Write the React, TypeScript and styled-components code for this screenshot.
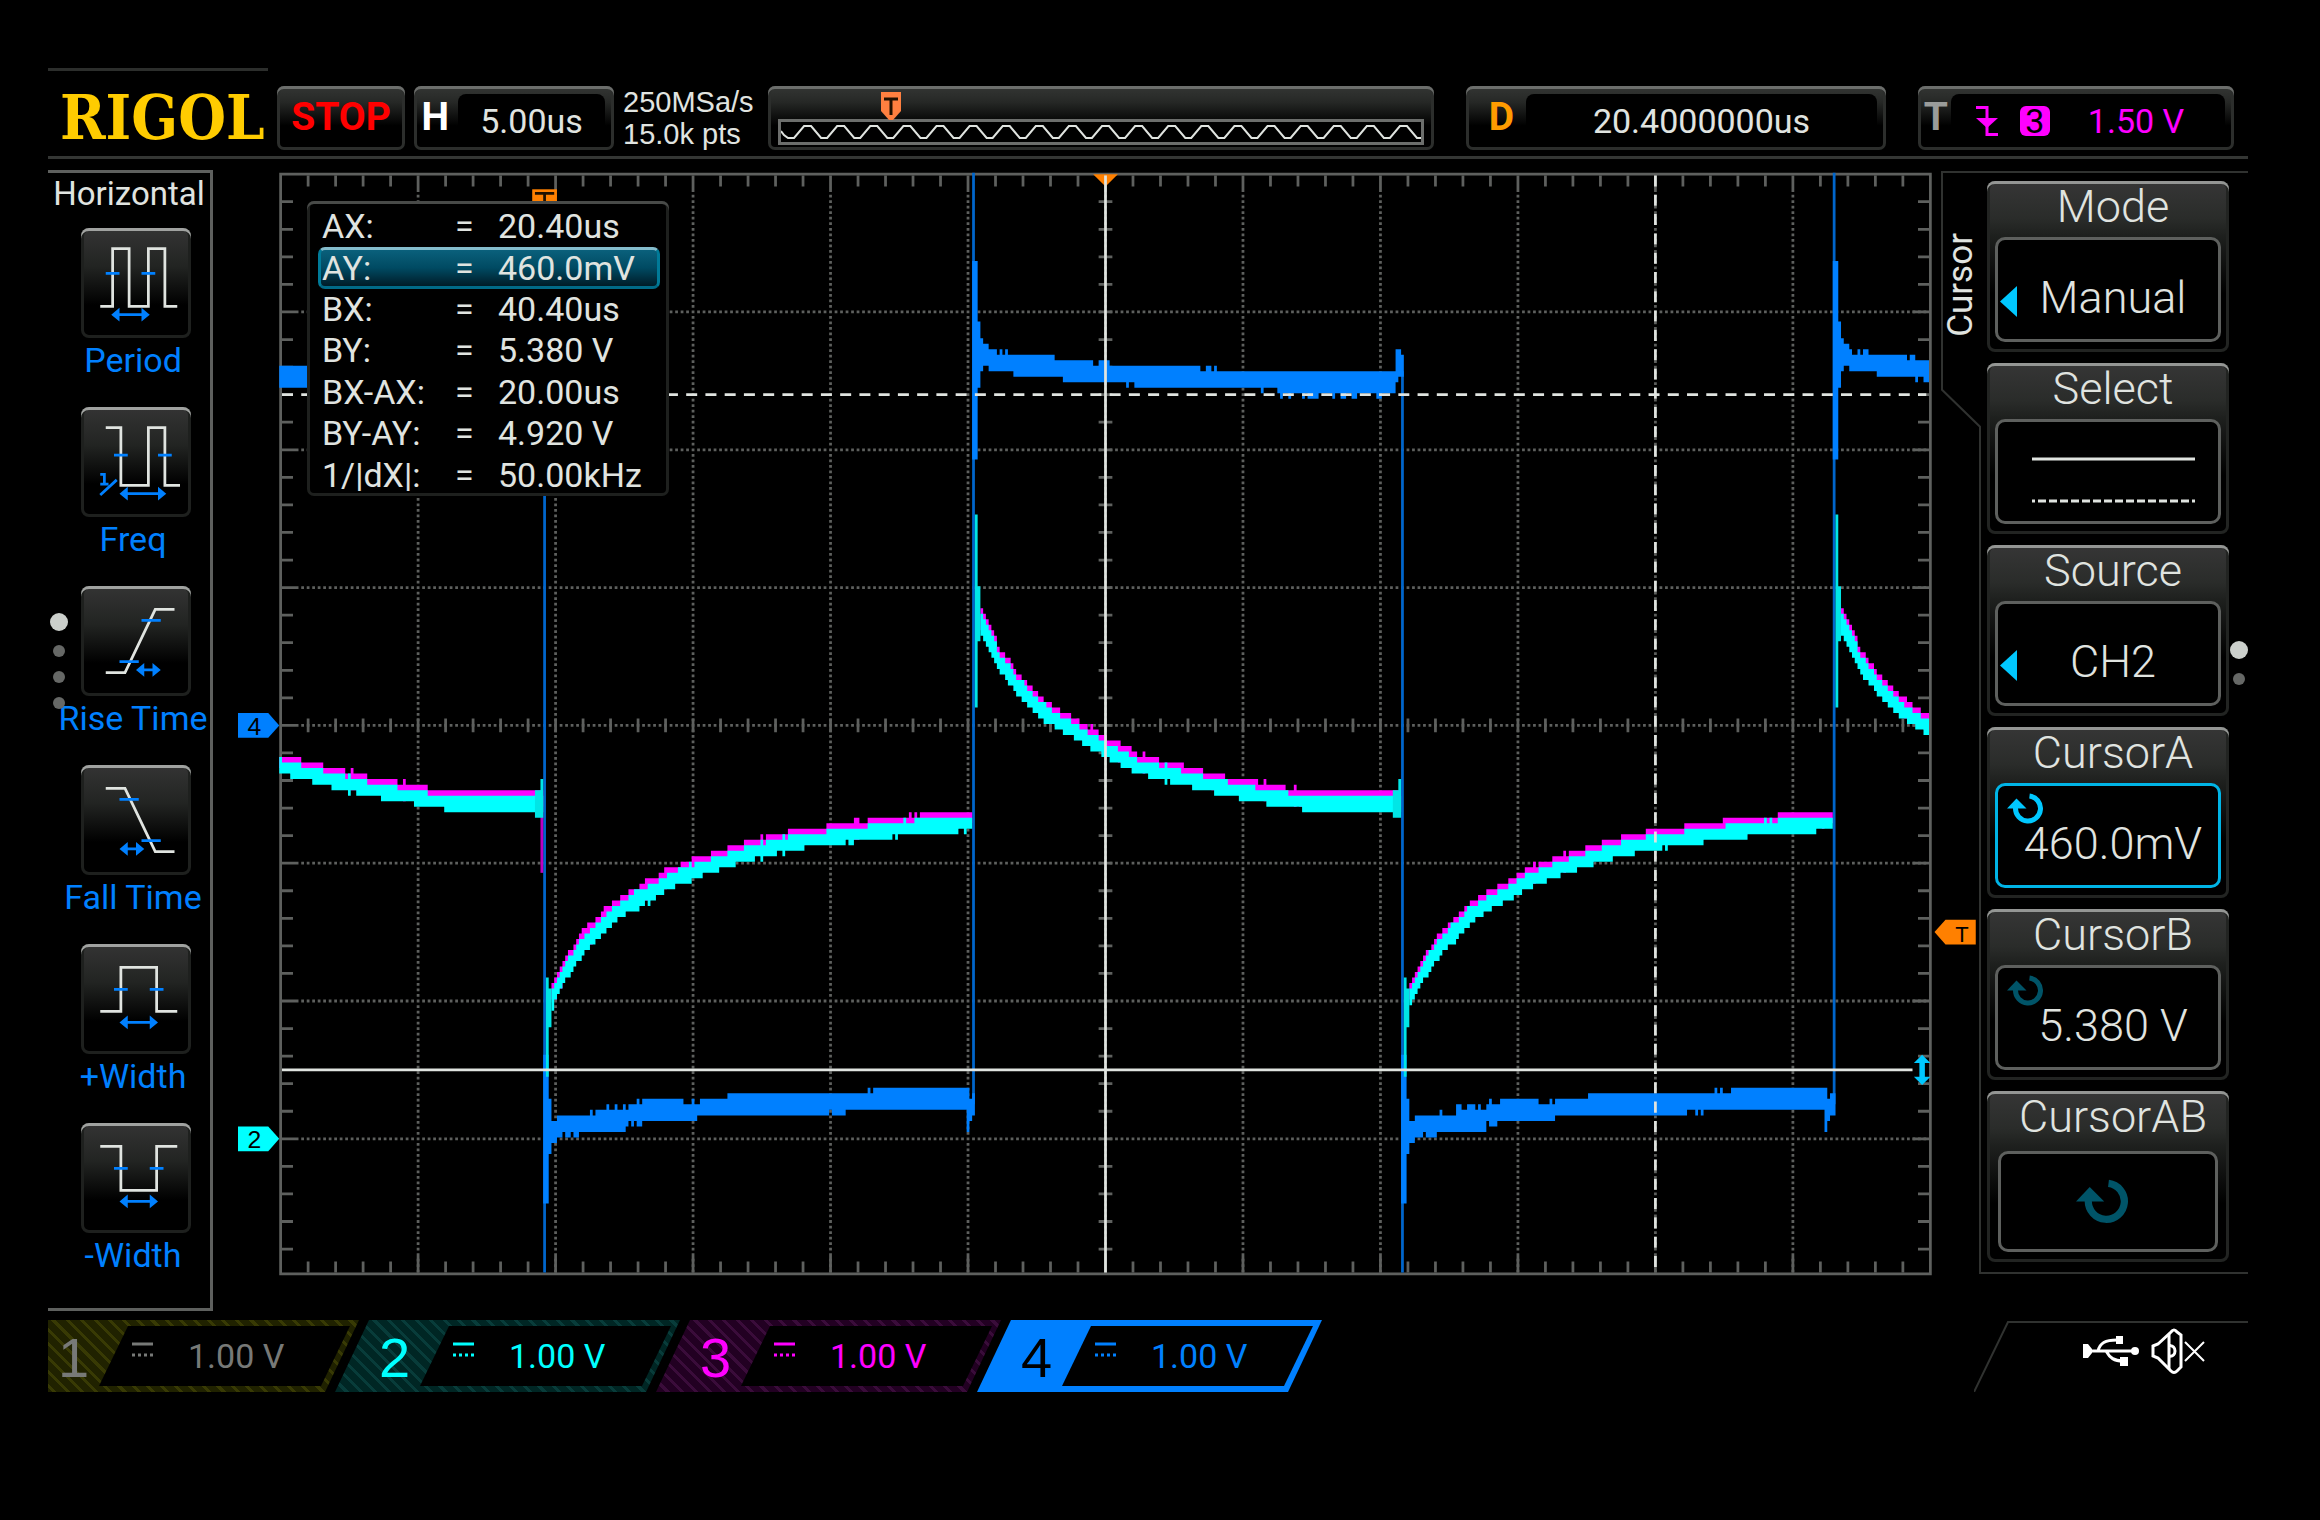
import React from "react";
import styled, { createGlobalStyle, css } from "styled-components";

const BLUE = "#0080ff";
const CYAN = "#00ffff";
const MAGENTA = "#ff00ff";
const ORANGE = "#ff8000";
const ACTIVE = "#00c8ff";
const INK = "#e0e4e0";
const GRID = "#5e605e";

const Global = createGlobalStyle`
  *, *::before, *::after { box-sizing: border-box; }
  body { margin: 0; background: #000; color: ${INK}; font-family: Roboto, "Liberation Sans", sans-serif; font-size: 34px; }
  button { font: inherit; color: inherit; background: none; border: 0; padding: 0; cursor: pointer; }
  svg { display: block; }
`;

const bevel = css`
  border-radius: 7px;
  box-shadow: inset 0 3px 0 #6c6e6c, inset 0 0 0 3px #2c2e2c;
  background: linear-gradient(#343634, #262826 25%, #000 62%);
`;

const Screen = styled.div`
  min-height: 100vh;
  padding: 68px 72px 128px 48px;
  overflow: hidden;
`;

/* ---------- header ---------- */

const TopRule = styled.div`
  width: 220px;
  height: 3px;
  background: #2c2e2c;
`;

const Header = styled.header`
  display: flex;
  align-items: center;
  gap: 9px;
  padding: 9px 14px 0 0;
  height: 88px;
  border-bottom: 3px solid #343634;
  white-space: nowrap;
`;

const Logo = styled.div`
  width: 220px;
  padding-left: 12px;
  flex: none;
  color: #ffcc00;
  font: bold 61px/64px "DejaVu Serif Condensed", "DejaVu Serif", serif;
  font-stretch: condensed;
`;

const StopButton = styled.button`
  ${bevel}
  flex: none;
  width: 128px;
  height: 64px;
  padding-bottom: 3px;
  color: #ff0000;
  font-weight: 700;
  font-size: 39px;
`;

const Readout = styled.button<{ $width: number }>`
  ${bevel}
  flex: none;
  display: flex;
  width: ${(p) => p.$width}px;
  height: 64px;
  padding: 8px 9px 3px 0;
`;

const ReadoutKey = styled.span<{ $color: string; $width: number; $gap?: number }>`
  width: ${(p) => p.$width}px;
  padding-right: ${(p) => p.$gap ?? 9}px;
  flex: none;
  color: ${(p) => p.$color};
  font-weight: 700;
  font-size: 39px;
  line-height: 46px;
  text-align: right;
`;

const ReadoutValue = styled.span`
  flex: 1;
  display: flex;
  align-items: center;
  justify-content: center;
  background: #000;
  border-radius: 8px 8px 0 0;
`;

const TriggerValue = styled(ReadoutValue)`
  gap: 22px;
  padding-right: 16px;
  color: ${MAGENTA};
`;

const Spacer = styled.div`
  flex: none;
  width: 14px;
`;

const SampleInfo = styled.div`
  flex: none;
  width: 136px;
  font-family: "Liberation Sans", sans-serif;
  font-size: 29px;
  line-height: 32px;
`;

const Memory = styled.div`
  ${bevel}
  position: relative;
  flex: 1;
  height: 64px;
  padding: 33px 10px 5px;
`;

const MemoryStrip = styled.div`
  height: 26px;
  border: 3px solid #6c6e6c;
  background: #000;
  svg { width: 100%; height: 20px; }
`;

const MemoryMark = styled.svg`
  position: absolute;
  left: 113px;
  top: 6px;
`;

const SourceBadge = styled.span`
  width: 30px;
  height: 30px;
  border-radius: 6px;
  background: ${MAGENTA};
  color: #000;
  line-height: 30px;
  text-align: center;
  margin-right: 16px;
`;

/* ---------- measurement panel ---------- */

const Main = styled.main`
  display: flex;
  align-items: flex-start;
  padding-top: 11px;
`;

const Measures = styled.nav`
  position: relative;
  flex: none;
  width: 165px;
  margin-right: 25px;
  padding-bottom: 6px;
  border: 3px solid ${GRID};
  border-left: 0;
`;

const MeasuresTitle = styled.h2`
  margin: 0 0 14px;
  font-size: 33px;
  font-weight: 400;
  line-height: 41px;
  text-align: center;
`;

const MeasureButton = styled.button`
  display: flex;
  flex-direction: column;
  align-items: center;
  width: 100%;
  height: 179px;
  padding-left: 8px;
  color: ${BLUE};
  line-height: 44px;
  white-space: nowrap;
`;

const Tile = styled.span`
  margin-left: 6px;
  border-radius: 8px;
  box-shadow: inset 0 3px 0 #a0a2a0, inset 0 0 0 3px #1e201e;
  background: linear-gradient(#343434, #222422 35%, #000 70%);
  svg { width: 110px; height: 110px; }
`;

const Dots = styled.div<{ $side: "left" | "right" }>`
  position: absolute;
  display: flex;
  flex-direction: column;
  align-items: center;
  gap: 14px;
  width: 18px;
  top: ${(p) => (p.$side === "left" ? 440 : 471)}px;
  ${(p) => p.$side}: ${(p) => (p.$side === "left" ? 2 : 0)}px;
`;

const Dot = styled.i<{ $on?: boolean }>`
  width: ${(p) => (p.$on ? 18 : 12)}px;
  height: ${(p) => (p.$on ? 18 : 12)}px;
  border-radius: 50%;
  background: ${(p) => (p.$on ? "#ccd0cc" : "#666866")};
`;

/* ---------- plot ---------- */

const PlotArea = styled.section`
  position: relative;
  flex: 1;
  min-width: 0;
`;

const PlotSvg = styled.svg`
  width: 100%;
  aspect-ratio: 1702 / 1108;
  overflow: visible;
`;

const CursorBox = styled.div`
  position: absolute;
  left: 69px;
  top: 31px;
  width: 362px;
  padding: 5px 9px 0 11px;
  border-radius: 7px;
  background: #000;
  box-shadow: inset 0 3px 0 #484a48, inset 0 0 0 3px #1e201e;
`;

const CursorTable = styled.table`
  width: 100%;
  height: 290px;
  border-collapse: separate;
  border-spacing: 0;
  table-layout: fixed;
  white-space: nowrap;
`;

const CursorRow = styled.tr<{ $active?: boolean }>`
  th, td {
    padding: 0;
    font-weight: 400;
    line-height: 35px;
    text-align: left;
    border: 3px solid transparent;
    border-left-width: 0;
    border-right-width: 0;
  }
  th { width: 137px; padding-left: 1px; border-left-width: 3px; }
  td:nth-child(2) { width: 43px; }
  td:last-child { border-right-width: 3px; }
  ${(p) =>
    p.$active &&
    css`
      th, td {
        background: linear-gradient(#0c6480, #004a62 50%, #00141e) border-box;
        border-color: #84bccc #007a98 #006a88 #007a98;
      }
      th { border-radius: 7px 0 0 7px; }
      td:last-child { border-radius: 0 7px 7px 0; }
    `}
`;

/* ---------- right menu ---------- */

const Menu = styled.aside`
  position: relative;
  flex: none;
  display: flex;
  width: 308px;
  padding: 11px 19px 13px 0;
`;

const MenuOutline = styled.svg`
  position: absolute;
  inset: 0;
  width: 100%;
  height: 100%;
  pointer-events: none;
`;

const MenuTab = styled.h2`
  width: 47px;
  margin: 0;
  padding-bottom: 52px;
  font-size: 35px;
  font-weight: 400;
  line-height: 42px;
  writing-mode: vertical-rl;
  transform: rotate(180deg);
  align-self: flex-start;
`;

const MenuItems = styled.div`
  flex: 1;
  display: flex;
  flex-direction: column;
  gap: 11px;
`;

const MenuButton = styled.button`
  height: 171px;
  padding: 2px 8px 10px;
  border-radius: 8px;
  box-shadow: inset 0 3px 0 #949694, inset 0 0 0 3px #222422;
  background: linear-gradient(#363636, #2a2c2a 22%, #1e201e 32%, #000 66%);
  display: flex;
  flex-direction: column;
  font-weight: 300;
  font-size: 45px;
`;

const MenuTitle = styled.span`
  flex: none;
  align-self: stretch;
  height: 54px;
  padding-left: 10px;
  line-height: 48px;
  text-align: center;
`;

const MenuValue = styled.span<{ $active?: boolean }>`
  position: relative;
  flex: 1;
  align-self: stretch;
  display: flex;
  align-items: center;
  justify-content: center;
  padding: 16px 0 0 10px;
  border: 3px solid ${(p) => (p.$active ? "#00b4e6" : GRID)};
  border-radius: 10px;
  background: #000;
`;

const KnobValue = styled(MenuValue)`
  margin: 4px 3px 0;
  padding: 0 12px 0 0;
`;

const ValueArrow = styled.svg`
  position: absolute;
  left: 2px;
  top: 46px;
`;

const KnobCorner = styled.span`
  position: absolute;
  left: 9px;
  top: 7px;
`;

/* ---------- footer ---------- */

const Footer = styled.footer`
  display: flex;
  height: 72px;
  margin-top: 9px;
  overflow: hidden;
`;

const Channels = styled.div`
  display: flex;
  margin-left: -34px;
`;

const ChannelTab = styled.button<{ $fill: string; $stripe: string }>`
  display: flex;
  width: 345px;
  height: 72px;
  margin-right: -24px;
  padding: 6px 9px 6px 0;
  clip-path: polygon(34px 0, 100% 0, calc(100% - 34px) 100%, 0 100%);
  background: repeating-linear-gradient(45deg, ${(p) => p.$fill} 0 7px, ${(p) => p.$stripe} 7px 10px);
`;

const ChannelNumber = styled.span<{ $color: string }>`
  width: 85px;
  padding-left: 44px;
  color: ${(p) => p.$color};
  font: 56px/64px "Liberation Sans", sans-serif;
  text-align: left;
`;

const ChannelBody = styled.span<{ $color: string }>`
  flex: 1;
  display: flex;
  align-items: center;
  gap: 35px;
  height: 60px;
  padding-left: 33px;
  background: #000;
  color: ${(p) => p.$color};
  clip-path: polygon(29px 0, 100% 0, calc(100% - 29px) 100%, 0 100%);
  line-height: 60px;
  svg { margin-bottom: 14px; }
`;

const Status = styled.div`
  position: relative;
  display: flex;
  align-items: center;
  justify-content: flex-end;
  gap: 12px;
  width: 274px;
  margin-left: auto;
  padding: 0 43px 10px 0;
`;

/* ---------- drawings ---------- */

type MeasureArt = { label: string; line: string; ticks: [number, number, number][]; arrow: [number, number, number]; over?: boolean };

const measures: MeasureArt[] = [
  { label: "Period", line: "M7 28.5H11.5V7.5H17.5V28.5H24.5V7.5H30.5V28.5H35", ticks: [[9, 14, 16.5], [22, 27, 16.5]], arrow: [11, 25, 31.5] },
  { label: "Freq", line: "M9 7.5H14.5V28.5H24.5V7.5H30.5V28.5H36", ticks: [[12, 17, 17.5], [28, 33, 17.5]], arrow: [14, 31, 31.5], over: true },
  { label: "Rise Time", line: "M9 31.5H16L27 8.5H34", ticks: [[22, 29, 12.5], [14, 21, 27.5]], arrow: [20, 29, 30.5] },
  { label: "Fall Time", line: "M9 8.5H16L27 31.5H34", ticks: [[14, 21, 12.5], [22, 29, 27.5]], arrow: [14, 23, 30.5] },
  { label: "+Width", line: "M7 24.5H14.5V8.5H27.5V24.5H35", ticks: [[12, 17, 16.5], [25, 30, 16.5]], arrow: [14, 28, 28.5] },
  { label: "-Width", line: "M7 8.5H14.5V24.5H27.5V8.5H35", ticks: [[12, 17, 16.5], [25, 30, 16.5]], arrow: [14, 28, 28.5] },
];

const MeasureIcon = ({ art }: { art: MeasureArt }) => {
  const [a, b, y] = art.arrow;
  return (
    <svg viewBox="0 0 40 40" fill="none" aria-hidden="true">
      <path d={art.line} stroke={INK} />
      <path d={art.ticks.map(([l, r, ty]) => `M${l} ${ty}H${r}`).join("") + `M${a + 2} ${y}H${b - 2}`} stroke={BLUE} />
      <path d={`M${a} ${y}l3-2.5v5zM${b} ${y}l-3-2.5v5z`} fill={BLUE} />
      {art.over && <path d="M7 24.5H8.5V28M7 28H10M7 32L13 26.5" stroke={BLUE} />}
    </svg>
  );
};

const KnobIcon = ({ color, width }: { color: string; width: number }) => (
  <svg width={width} viewBox="0 0 36 31" fill="none" aria-hidden="true">
    <path d="M22.5 3A12.5 12.5 0 1 1 8.5 15" stroke={color} strokeWidth="5" />
    <path d="M0 15.5L9.5 5.5L19.5 15.5Z" fill={color} />
  </svg>
);

/* Coordinates below are in the instrument's own 800 x 480 pixels. */
const LEFT = 84;
const RIGHT = 684;
const TOP = 38;
const BOTTOM = 437;
const MID_X = 384;
const MID_Y = 238;

type Column = [number, number, number];

const noise = (x: number, seed: number) => {
  const v = Math.sin(x * 12.9898 + seed * 78.233) * 43758.5453;
  return v - Math.floor(v);
};

const outline = (cols: Column[]) => {
  const shown = cols.filter(([x]) => x >= LEFT && x < RIGHT);
  const over = shown.map(([x, t]) => `L${x} ${t}H${x + 1}`).join("");
  const under = [...shown].reverse().map(([x, , b]) => `L${x + 1} ${b}H${x}`).join("");
  return `M${over.slice(1)}${under}Z`;
};

/* [first offset, top, bottom], each run lasting until the next one starts */
const highRuns: Column[] = [
  [0, 70, 142], [2, 92, 116], [3, 98, 110], [4, 100, 108], [6, 102, 110], [13, 104, 110], [16, 104, 112], [30, 106, 112],
  [33, 106, 114], [50, 108, 114], [60, 108, 116], [89, 110, 116], [111, 110, 118], [154, 102, 114], [155, 102, 112], [156, 104, 112],
];
const lowRuns: Column[] = [
  [0, 358, 412], [2, 374, 394], [3, 382, 390], [5, 380, 388], [13, 380, 386], [20, 378, 386], [23, 376, 386], [29, 378, 386],
  [31, 376, 384], [36, 374, 382], [55, 376, 382], [57, 374, 380], [68, 372, 380], [110, 372, 378], [120, 370, 378],
  [154, 370, 386], [155, 374, 382], [156, 372, 380],
];

const fromRuns = (runs: Column[], start: number, length: number) => {
  const cols: Column[] = [];
  for (let i = 0; i <= length; i++) {
    const at = runs.reduce((best, r, k) => (r[0] <= i ? k : best), 0);
    let [, t, b] = runs[at];
    const next = runs[at + 1];
    if (i > 5 && i < 140 && next && next[0] - i < 7) {
      if (next[1] !== t && noise(start + i, 3) > 0.7) t = next[1];
      if (next[2] !== b && noise(start + i, 5) > 0.7) b = next[2];
    }
    if (runs === highRuns && i > 111 && i < 150 && noise(start + i, 8) > 0.62) b += 2;
    cols.push([start + i, t, b]);
  }
  return cols;
};

const decay: [number, number][] = [
  [3, 201], [5.5, 206], [10.7, 217], [16, 223.5], [21, 229], [26, 233.5], [31, 237], [37, 240.5], [48, 247], [60, 253.5],
  [77, 257.8], [93, 261.8], [104, 263.7], [121, 266.6], [140, 267.4], [157, 267.2],
];
const charge: [number, number][] = [
  [3, 338], [5, 334.4], [8.3, 327.8], [11, 323.5], [15, 318], [19, 314], [22.6, 310.2], [27, 306], [33, 302.4], [38, 300],
  [43, 297], [48.5, 294], [55, 291.5], [63, 288.7], [70.6, 286.4], [78, 284.2], [87.5, 281.8], [97, 280.2], [107, 279],
  [117, 277.6], [125, 276.6], [133, 275.6], [146, 275], [157, 274],
];

const level = (curve: [number, number][], x: number) => {
  for (let i = 1; i < curve.length; i++) {
    const [x0, y0] = curve[i - 1];
    const [x1, y1] = curve[i];
    if (x <= x1) return y0 + ((y1 - y0) * (x - x0)) / (x1 - x0);
  }
  return curve[curve.length - 1][1];
};

const fromCurve = (curve: [number, number][], start: number, length: number, lift: number, seed: number) => {
  const cols: Column[] = [];
  for (let i = 3; i <= length; i++) {
    const a = level(curve, i);
    const b = level(curve, i + 1);
    const jitter = noise(start + i, seed) > 0.86 ? 1 : 0;
    const t = 2 * Math.round((Math.min(a, b) - 2.4 - lift - jitter * 0.7) / 2);
    const u = 2 * Math.round((Math.max(a, b) + 2.4 - lift + jitter * 0.7) / 2);
    cols.push([start + i, t, u]);
  }
  return cols;
};

const highs = [[24, 156], [336, 156], [649, 156]];
const lows = [[180, 156], [492, 157]];

const bluePath = highs.map(([s, n]) => outline(fromRuns(highRuns, s, n))).join("") + lows.map(([s, n]) => outline(fromRuns(lowRuns, s, n))).join("");

const slowPath = (lift: number, seed: number) =>
  highs.map(([s, n]) => outline(fromCurve(decay, s, n - 1, lift, seed))).join("") +
  lows.map(([s, n]) => outline(fromCurve(charge, s, n - 1, lift, seed))).join("");

const spikes = [336, 649].map((s) => `M${s + 1} 162h1v26h1v20h-1v24h-1z`).join("") +
  [180, 492].map((s) => `M${s - 1} 258h1v14h-3v-10h2zM${s + 1} 330h1v4h1v14h-1v18h-1z`).join("");

const ticks = () => {
  let d = "";
  for (let x = LEFT + 10; x < RIGHT; x += 10) {
    const n = (x - LEFT) % 50 === 0 ? 6 : 4;
    d += `M${x} ${TOP + 1}h1v${n}h-1zM${x} ${BOTTOM - n}h1v${n}h-1zM${x} ${MID_Y - 2}h1v5h-1z`;
  }
  for (let y = TOP + 10; y < BOTTOM; y += 10) {
    const n = (y - TOP) % 50 === 0 ? 6 : 4;
    d += `M${LEFT + 1} ${y}v1h${n}v-1zM${RIGHT - n} ${y}v1h${n}v-1zM${MID_X - 2} ${y}v1h5v-1z`;
  }
  return d;
};

const gridLines = () => {
  let d = "";
  for (let x = LEFT + 50; x < RIGHT; x += 50) d += `M${x + 0.5} ${TOP + 8}V${BOTTOM}`;
  for (let y = TOP + 50; y < BOTTOM; y += 50) d += `M${LEFT + 8} ${y + 0.5}H${RIGHT}`;
  return d;
};

const Plot = () => (
  <PlotSvg viewBox="69 37 619 402" preserveAspectRatio="none" role="img" aria-label="Waveform display" fontFamily="Liberation Sans, sans-serif" fontSize="9" textAnchor="middle">
    <path d={gridLines()} stroke={GRID} strokeDasharray="1 1" fill="none" />
    <path d={ticks()} fill={GRID} />
    <rect x={LEFT + 0.5} y={TOP + 0.5} width={RIGHT - LEFT} height={BOTTOM - TOP} fill="none" stroke={GRID} />

    <path d="M180.5 52V437M336.5 38V376M492.5 110V437M649.5 38V376" stroke="#0066cc" fill="none" />
    <path d={bluePath} fill={BLUE} />
    <path d={slowPath(2, 4)} fill={MAGENTA} />
    <path d="M179 268h1v24h-1z" fill="#c000c0" />
    <path d={slowPath(0, 2)} fill={CYAN} />
    <path d={spikes} fill="#00e6e6" />

    <path d="M380 38.5h9l-4.500 4.500z" fill={ORANGE} />
    <path d="M384.5 39V437M85 363.5H678" stroke={INK} fill="none" />
    <path d="M85 118.500H683M584.5 39V437" stroke={INK} strokeDasharray="4 3" fill="none" />
    <path d="M681.5 358l3 3h-2v5h2l-3 3-3-3h2v-5h-2z" fill={ACTIVE} />

    <rect x="176" y="44" width="9" height="8" fill={ORANGE} />
    <path d="M177 45.500H184M180.500 45V52" stroke="#201000" fill="none" />

    <path d="M69 234h11l4 4.500-4 4.500H69z" fill={BLUE} />
    <text x="75" y="242">4</text>
    <path d="M69 384h11l4 4.500-4 4.500H69z" fill={CYAN} />
    <text x="75" y="392">2</text>
    <path d="M701 309h-11l-4 4.500 4 4.500h11z" fill={ORANGE} />
    <text x="696" y="317" fontSize="8">T</text>
  </PlotSvg>
);

const memoryWave = "M0 9L3 13" + Array.from({ length: 20 }, (_, k) => {
  const c = 10 + 33 * k;
  return `L${c - 3} 16H${c + 3}` + (k < 19 ? `L${c + 13} 4H${c + 20}` : "");
}).join("");

/* ---------- data ---------- */

const cursorRows = [
  ["AX:", "20.40us"], ["AY:", "460.0mV"], ["BX:", "40.40us"], ["BY:", "5.380 V"],
  ["BX-AX:", "20.00us"], ["BY-AY:", "4.920 V"], ["1/|dX|:", "50.00kHz"],
];

const channels = [
  { id: "1", fill: "#202200", stripe: "#383a04", number: "#777977", text: "#777977" },
  { id: "2", fill: "#002624", stripe: "#083c3a", number: CYAN, text: CYAN },
  { id: "3", fill: "#220022", stripe: "#3a0c3a", number: MAGENTA, text: MAGENTA },
  { id: "4", fill: BLUE, stripe: BLUE, number: "#000", text: BLUE },
];

function Arrow() {
  return (
    <ValueArrow width="17" height="31" aria-hidden="true">
      <path d="M0 15.500L17 0V31Z" fill={ACTIVE} />
    </ValueArrow>
  );
}

const menu: { title: string; value: React.ReactNode }[] = [
  { title: "Mode", value: <MenuValue><Arrow />Manual</MenuValue> },
  {
    title: "Select",
    value: (
      <MenuValue>
        <svg width="163" height="46" fill="none" stroke={INK} strokeWidth="3" aria-hidden="true">
          <path d="M0 2H163" />
          <path d="M0 44H3M6 44H157" strokeDasharray="8 3" />
          <path d="M160 44H163" />
        </svg>
      </MenuValue>
    ),
  },
  { title: "Source", value: <MenuValue><Arrow />CH2</MenuValue> },
  { title: "CursorA", value: <MenuValue $active><KnobCorner><KnobIcon color={ACTIVE} width={36} /></KnobCorner>460.0mV</MenuValue> },
  { title: "CursorB", value: <MenuValue><KnobCorner><KnobIcon color="#005468" width={36} /></KnobCorner>5.380 V</MenuValue> },
  { title: "CursorAB", value: <KnobValue><KnobIcon color="#005468" width={52} /></KnobValue> },
];

export default function App() {
  return (
    <Screen>
      <Global />
      <TopRule />
      <Header>
        <Logo>RIGOL</Logo>
        <StopButton>STOP</StopButton>
        <Readout $width={200}>
          <ReadoutKey $color="#fff" $width={44}>H</ReadoutKey>
          <ReadoutValue>5.00us</ReadoutValue>
        </Readout>
        <SampleInfo>
          <div>250MSa/s</div>
          <div>15.0k pts</div>
        </SampleInfo>
        <Memory>
          <MemoryStrip>
            <svg viewBox="0 0 638 20" preserveAspectRatio="none" aria-hidden="true">
              <path d={memoryWave} fill="none" stroke={INK} strokeWidth="2" />
            </svg>
          </MemoryStrip>
          <MemoryMark width="20" height="28" aria-hidden="true">
            <path d="M0 0H20V19L12 28H8L0 19Z" fill="#ff8040" />
            <path d="M3 7H17M10 7V23" stroke="#201000" strokeWidth="3" />
          </MemoryMark>
        </Memory>
        <Spacer />
        <Readout $width={420}>
          <ReadoutKey $color="#ff9c00" $width={60} $gap={12}>D</ReadoutKey>
          <ReadoutValue>20.4000000us</ReadoutValue>
        </Readout>
        <Spacer />
        <Readout $width={316}>
          <ReadoutKey $color="#9a9c9a" $width={33} $gap={3}>T</ReadoutKey>
          <TriggerValue>
            <svg width="22" height="30" aria-hidden="true">
              <path d="M0 1.500H11V28.500H22" fill="none" stroke={MAGENTA} strokeWidth="3" />
              <path d="M0 12H22L11 22Z" fill={MAGENTA} />
            </svg>
            <SourceBadge>3</SourceBadge>
            <span>1.50 V</span>
          </TriggerValue>
        </Readout>
      </Header>

      <Main>
        <Measures aria-label="Horizontal measurements">
          <MeasuresTitle>Horizontal</MeasuresTitle>
          {measures.map((m) => (
            <MeasureButton key={m.label}>
              <Tile><MeasureIcon art={m} /></Tile>
              {m.label}
            </MeasureButton>
          ))}
          <Dots $side="left"><Dot $on /><Dot /><Dot /><Dot /></Dots>
        </Measures>

        <PlotArea>
          <Plot />
          <CursorBox>
            <CursorTable>
              <tbody>
                {cursorRows.map(([name, value]) => (
                  <CursorRow key={name} $active={name === "AY:"}>
                    <th scope="row">{name}</th>
                    <td>=</td>
                    <td>{value}</td>
                  </CursorRow>
                ))}
              </tbody>
            </CursorTable>
          </CursorBox>
        </PlotArea>

        <Menu>
          <MenuOutline viewBox="0 0 308 1106" preserveAspectRatio="none" fill="none" stroke="#303230" strokeWidth="2" aria-hidden="true">
            <path d="M308 2H2V220L40 257V1104H308" />
          </MenuOutline>
          <MenuTab>Cursor</MenuTab>
          <MenuItems>
            {menu.map((m) => (
              <MenuButton key={m.title}>
                <MenuTitle>{m.title}</MenuTitle>
                {m.value}
              </MenuButton>
            ))}
          </MenuItems>
          <Dots $side="right"><Dot $on /><Dot /></Dots>
        </Menu>
      </Main>

      <Footer>
        <Channels>
          {channels.map((c) => (
            <ChannelTab key={c.id} $fill={c.fill} $stripe={c.stripe}>
              <ChannelNumber $color={c.number}>{c.id}</ChannelNumber>
              <ChannelBody $color={c.text}>
                <svg width="21" height="15" fill="none" stroke={c.text} strokeWidth="3" aria-hidden="true">
                  <path d="M0 2H21" />
                  <path d="M0 13H21" strokeDasharray="3" />
                </svg>
                1.00 V
              </ChannelBody>
            </ChannelTab>
          ))}
        </Channels>
        <Status>
          <MenuOutline viewBox="0 0 274 72" preserveAspectRatio="none" fill="none" stroke="#303230" strokeWidth="2" aria-hidden="true">
            <path d="M0 72L34 2H274" />
          </MenuOutline>
          <svg width="56" height="32" fill="none" stroke="#fff" strokeWidth="3" role="img" aria-label="USB">
            <path d="M4 16H52M15 16C17 8 22 5 34 5M23 16C27 23 31 26 40 26" />
            <path d="M0 9H5L9 14V18L5 23H0ZM33 1H40V9H33ZM37 22H45V31H37Z" fill="#fff" stroke="none" />
            <circle cx="52" cy="16" r="4" fill="#fff" stroke="none" />
          </svg>
          <svg width="54" height="46" fill="none" stroke="#fff" strokeWidth="3" role="img" aria-label="Muted">
            <path d="M2 18L7 16L20 4Q23 0 26 4L30 7V39L26 43Q23 46 20 43L7 30L2 28Z" />
            <path d="M18 6V41M18 18C26 16 26 30 18 28" />
            <path d="M34 14L53 33M53 14L34 33" strokeWidth="2" />
          </svg>
        </Status>
      </Footer>
    </Screen>
  );
}
